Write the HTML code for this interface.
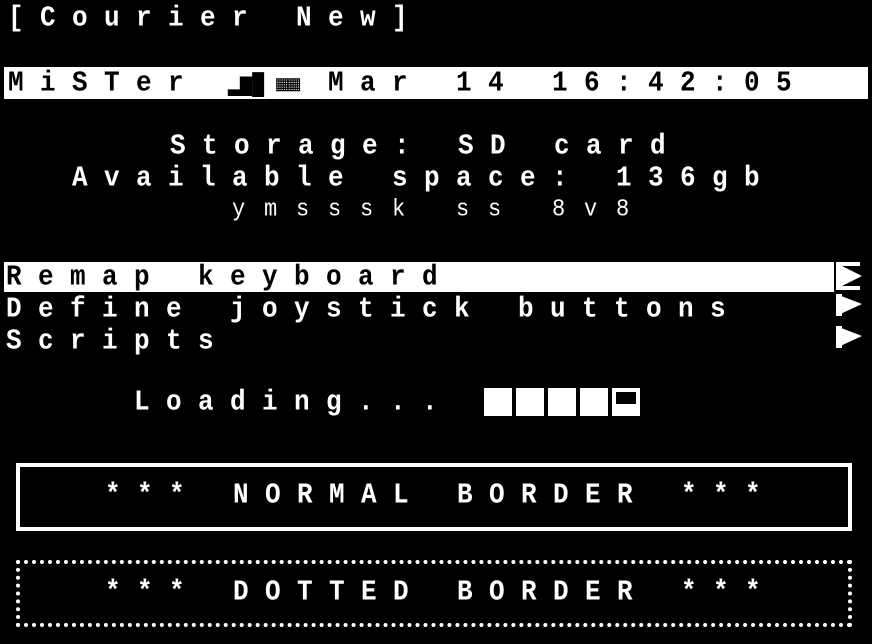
<!DOCTYPE html>
<html><head><style>
html,body{margin:0;padding:0;background:#000;width:872px;height:644px;overflow:hidden;position:relative}
.t{position:absolute;font-family:"Liberation Mono",monospace;font-weight:bold;font-size:26px;letter-spacing:16.4px;color:#fff;white-space:pre;line-height:32px;height:32px;transform:scaleY(1.1);transform-origin:left center}
.bar{position:absolute;background:#fff}
.box{position:absolute;background:#fff;width:28px;height:28px;top:388px}
</style></head><body>
<div class="t" style="left:8px;top:2px">[Courier New]</div>
<div class="bar" style="left:4px;top:67px;width:864px;height:32px"></div>
<div class="t" style="left:8px;top:67px;color:#000">MiSTer    Mar 14 16:42:05</div>
<div class="t" style="left:228px;top:70px;color:#000;font-size:20px;letter-spacing:0">▂▆█ ▦▦</div>
<div class="t" style="left:170px;top:130px">Storage: SD card</div>
<div class="t" style="left:72px;top:162px">Available space: 136gb</div>
<div class="t" style="left:232px;top:194px;font-size:22px;letter-spacing:18.8px;font-weight:normal">ymsssk ss 8v8</div>
<div class="bar" style="left:4px;top:262px;width:830px;height:30px"></div>
<div class="t" style="left:6px;top:261px;color:#000">Remap keyboard</div>
<div class="t" style="left:6px;top:293px">Define joystick buttons</div>
<div class="t" style="left:6px;top:325px">Scripts</div>
<svg style="position:absolute;left:834px;top:260px" width="38" height="100">
<path d="M2 2h24v4h-18l20 10-20 10h18v4h-24z" fill="#fff"/>
<path d="M2 34l26 10-26 12v-4h6z" fill="#fff"/><rect x="2" y="34" width="6" height="22" fill="#fff"/>
<path d="M2 66l26 10-26 12z" fill="#fff"/><rect x="2" y="66" width="6" height="22" fill="#fff"/>
</svg>
<div class="t" style="left:134px;top:386px">Loading...</div>
<div class="box" style="left:484px"></div>
<div class="box" style="left:516px"></div>
<div class="box" style="left:548px"></div>
<div class="box" style="left:580px"></div>
<div class="box" style="left:612px"></div>
<div style="position:absolute;left:616px;top:392px;width:20px;height:12px;background:#000"></div>
<div style="position:absolute;left:16px;top:463px;width:828px;height:60px;border:4px solid #fff"></div>
<div class="t" style="left:105px;top:479px">*** NORMAL BORDER ***</div>
<div style="position:absolute;left:16px;top:560px;width:836px;height:67px;box-sizing:border-box;border:4px dotted #fff"></div>
<div class="t" style="left:105px;top:576px">*** DOTTED BORDER ***</div>
</body></html>
